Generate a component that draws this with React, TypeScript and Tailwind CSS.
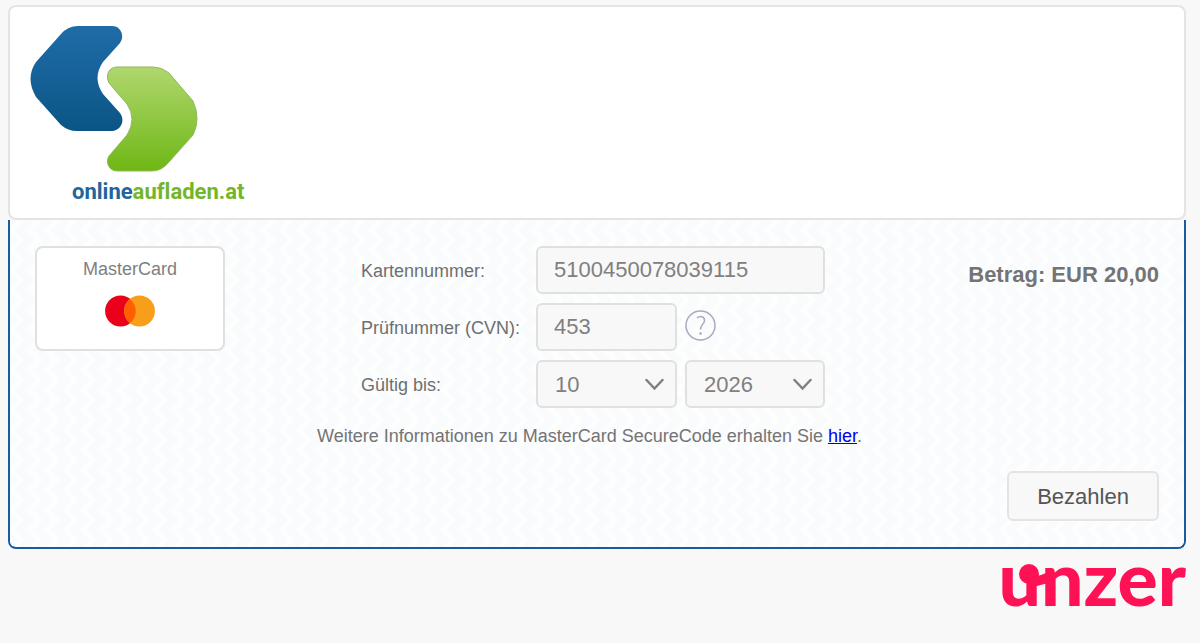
import React, { useState } from 'react';

const fieldClass = 'h-12 border-2 border-[#e0e0e0] rounded-md bg-[#f8f8f8] text-[22px] text-[#808080] outline-none';
const labelClass = 'w-[175px] shrink-0 pt-[2px] text-lg text-[#6f6f6f]';

function ShopLogo() {
    return (
        <div className="w-[232px]">
            <svg width="170" height="148" viewBox="29 24 170 148" aria-hidden="true">
                <defs>
                    <linearGradient id="blue" x1="0" y1="0" x2="0" y2="1">
                        <stop offset="0" stopColor="#1f6ca8" />
                        <stop offset="1" stopColor="#0b5585" />
                    </linearGradient>
                    <linearGradient id="green" x1="0" y1="0" x2="0" y2="1">
                        <stop offset="0" stopColor="#afd76e" />
                        <stop offset="1" stopColor="#6fb715" />
                    </linearGradient>
                </defs>
                <path fill="url(#blue)" d="M78 26H112C121 26 125 36 120 43L103 62Q92 78 103 94L120 113C126 121 120 131 112 131H77Q68 131 61 125L36 97Q25 78 36 62L61 34Q68 26 78 26Z" />
                <path fill="url(#green)" stroke="#8fb95a" strokeWidth="1" d="M117 67H153Q162 67 169 73L193 101Q201 119 193 135L169 162Q162 171 152 171H117C109 171 105 162 109 156L127 135Q137 119 127 104L109 83C105 75 109 67 117 67Z" />
            </svg>
            <div className="pl-[43px] mt-2 font-['Roboto',sans-serif] text-[22px] leading-6 font-bold [font-variant-ligatures:none] text-[#21659b]">
                online<span className="text-[#74b629]">aufladen.at</span>
            </div>
        </div>
    );
}

function MastercardIcon() {
    return (
        <svg width="50" height="32" viewBox="0 0 50 32" aria-hidden="true">
            <circle cx="15.500" cy="16" r="15.400" fill="#eb001b" />
            <circle cx="34.500" cy="16" r="15.400" fill="#f79e1b" />
            <path d="M25 4A15.400 15.400 0 0 1 25 28A15.400 15.400 0 0 1 25 4Z" fill="#ff5f00" />
        </svg>
    );
}

function Herringbone() {
    return (
        <svg className="absolute inset-0 w-full h-full" aria-hidden="true">
            <defs>
                <pattern id="herringbone" width="18" height="20" patternUnits="userSpaceOnUse">
                    <path
                        d="M-26 -10L-16 0L-26 10L-16 20L-26 30M-8 -10L2 0L-8 10L2 20L-8 30M10 -10L20 0L10 10L20 20L10 30M28 -10L38 0L28 10L38 20L28 30"
                        fill="none"
                        stroke="#f9fbfc"
                        strokeWidth="8"
                    />
                </pattern>
            </defs>
            <rect width="100%" height="100%" fill="url(#herringbone)" />
        </svg>
    );
}

interface DropdownProps {
    label: string;
    value: string;
    options: string[];
    onChange: (value: string) => void;
    className: string;
}

function Dropdown({ label, value, options, onChange, className }: DropdownProps) {
    return (
        <div className={`relative ${className}`}>
            <select
                id={label}
                aria-label={label}
                value={value}
                onChange={(e) => onChange(e.target.value)}
                className={`${fieldClass} w-full appearance-none pl-[17px]`}
            >
                {options.map((o) => <option key={o}>{o}</option>)}
            </select>
            <svg className="absolute right-3 top-[18px] pointer-events-none" width="20" height="14" viewBox="0 0 20 14" fill="none" stroke="#808080" strokeWidth="2.500" strokeLinecap="round" aria-hidden="true">
                <path d="M1.500 2L9.500 10.500L17.500 2" />
            </svg>
        </div>
    );
}

function UnzerLogo() {
    return (
        <div className="relative font-['Lato',sans-serif] text-[75px] leading-[50px] font-black text-[#ff1155]">
            unzer
            {/* Dot that joins the first two letters */}
            <svg className="absolute left-[20px] top-[11px]" width="36" height="30" viewBox="0 0 36 30" aria-hidden="true">
                <circle cx="11" cy="11" r="10" fill="#ff1155" />
                <path d="M18 13Q22 13 30 9V20L19 23L10 20Z" fill="#ff1155" />
            </svg>
        </div>
    );
}

export default function App() {
    const [month, setMonth] = useState('10');
    const [year, setYear] = useState('2026');

    return (
        <div className="min-h-screen bg-[#f8f8f8] pl-2 pr-[14px] pt-[5px] font-['Liberation_Sans',Arial,sans-serif]">
            <header className="h-[215px] bg-white border-2 border-[#e4e4e4] rounded-lg pl-[19px] pt-[17px]">
                <ShopLogo />
            </header>

            <main className="relative bg-[#fdfefe] border-2 border-t-0 border-[#1a5a9e] rounded-b-lg overflow-hidden">
                <Herringbone />
                <form className="relative px-[25px] py-[26px]" onSubmit={(e) => e.preventDefault()}>
                    <div className="flex items-start">
                        <div className="w-[190px] h-[105px] shrink-0 bg-white border-2 border-[#e0e0e0] rounded-lg flex flex-col items-center pt-[7px]">
                            <span className="text-lg leading-7 text-[#808080]">MasterCard</span>
                            <div className="pt-3"><MastercardIcon /></div>
                        </div>

                        {/* Card data */}
                        <div className="ml-[136px] w-[465px] flex flex-col gap-[9px]">
                            <div className="flex items-center">
                                <label htmlFor="number" className={labelClass}>Kartennummer:</label>
                                <input id="number" defaultValue="5100450078039115" className={`${fieldClass} w-[289px] px-4`} />
                            </div>
                            <div className="flex items-center">
                                <label htmlFor="cvn" className={labelClass}>Prüfnummer (CVN):</label>
                                <input id="cvn" defaultValue="453" className={`${fieldClass} w-[141px] px-4`} />
                                <button type="button" aria-label="Hilfe" className="ml-2 mb-1">
                                    <svg width="31" height="31" viewBox="0 0 31 31" fill="none" stroke="#a9a9bd" aria-hidden="true">
                                        <circle cx="15.500" cy="15.500" r="14.500" strokeWidth="1.500" />
                                        <path d="M12 8C15 5.500 19.500 6.500 19.500 10.500C19.500 14 15.500 14.500 15.500 19.500" strokeWidth="1.500" />
                                        <circle cx="15.500" cy="23.500" r="1.300" fill="#a9a9bd" stroke="none" />
                                    </svg>
                                </button>
                            </div>
                            <div className="flex items-center">
                                <label htmlFor="Monat" className={labelClass}>Gültig bis:</label>
                                <Dropdown label="Monat" value={month} onChange={setMonth} className="w-[141px]"
                                    options={['01', '02', '03', '04', '05', '06', '07', '08', '09', '10', '11', '12']} />
                                <Dropdown label="Jahr" value={year} onChange={setYear} className="w-[140px] ml-2"
                                    options={['2024', '2025', '2026', '2027', '2028']} />
                            </div>
                        </div>

                        <div className="ml-auto pt-[13px] text-[22px] leading-8 font-bold text-[#747474] whitespace-nowrap">
                            Betrag: EUR 20,00
                        </div>
                    </div>

                    <p className="mt-[14px] pl-[282px] text-lg leading-7 text-[#747474]">
                        Weitere Informationen zu MasterCard SecureCode erhalten Sie{' '}
                        <a href="#securecode" className="text-[#0000ee] underline">hier</a>.
                    </p>

                    <div className="flex justify-end mt-[21px]">
                        <button type="submit" className="w-[152px] h-[50px] border-2 border-[#e4e4e4] rounded-md bg-[#f8f8f8] text-[22px] text-[#555555]">
                            Bezahlen
                        </button>
                    </div>
                </form>
            </main>

            <footer className="flex justify-end pt-[3px]">
                <UnzerLogo />
            </footer>
        </div>
    );
}
